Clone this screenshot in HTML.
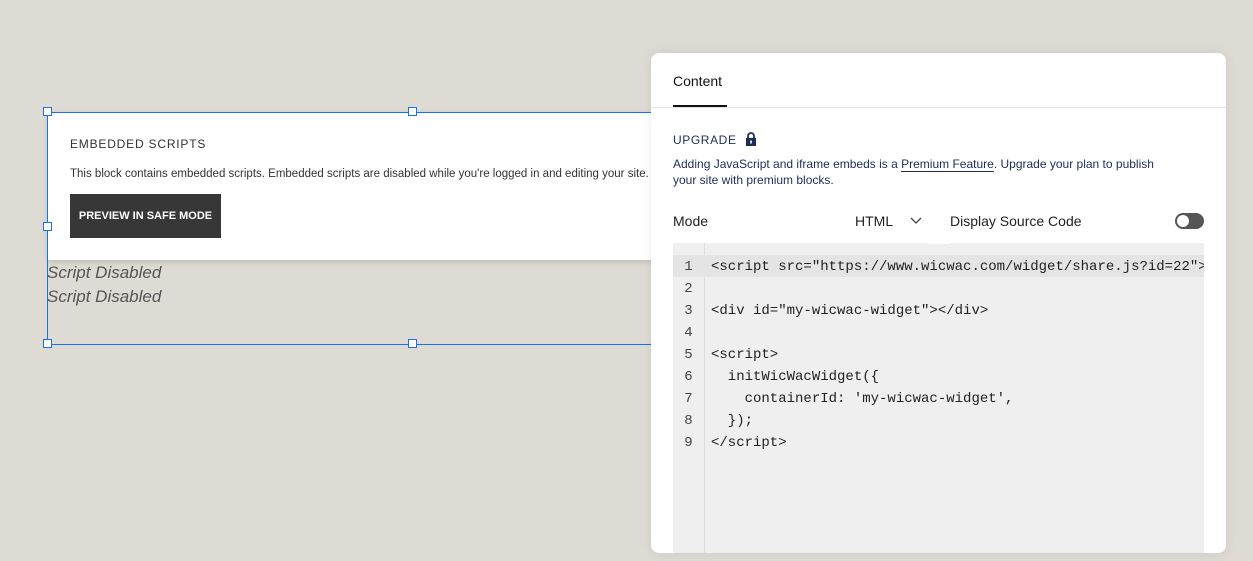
<!DOCTYPE html>
<html><head><style>
body{margin:0;width:1253px;height:561px;background:#dedbd5;font-family:"Liberation Sans",sans-serif;position:relative;overflow:hidden}
.abs{position:absolute}
.card{left:48px;top:112px;width:640px;height:148px;background:#fff;box-shadow:0 2px 6px rgba(0,0,0,.15)}
.h{width:7px;height:7px;border:1.5px solid #1a6ff0;background:#fff}
.panel{left:651px;top:53px;width:575px;height:500px;background:#fff;border-radius:8px;box-shadow:0 0 12px rgba(0,0,0,.08);overflow:hidden}
.code{font-family:"Liberation Mono",monospace;font-size:14px;color:#222}
.ln{position:absolute;left:0;width:31px;text-align:center;color:#444}
.ct{position:absolute;left:38px;white-space:pre}
</style></head><body>
<div class="abs card">
<div class="abs" style="left:22px;top:25px;font-size:12px;letter-spacing:.8px;color:#333">EMBEDDED SCRIPTS</div>
<div class="abs" style="left:22px;top:56px;font-size:11.5px;color:#333;white-space:nowrap">This block contains embedded scripts. Embedded scripts are disabled while you're logged in and editing your site.</div>
<div class="abs" style="left:22px;top:82px;width:151px;height:44px;background:#373737;color:#fff;font-size:11px;font-weight:bold;line-height:44px;text-align:center">PREVIEW IN SAFE MODE</div>
</div>
<div class="abs" style="left:47px;top:261px;font-size:17px;font-style:italic;color:#555;line-height:24px">Script Disabled<br>Script Disabled</div>
<div class="abs" style="left:47px;top:112px;width:620px;height:231px;border:1px solid #1a6ff0;border-right:none"></div>
<div class="abs h" style="left:43px;top:107px"></div>
<div class="abs h" style="left:408px;top:107px"></div>
<div class="abs h" style="left:43px;top:222px"></div>
<div class="abs h" style="left:43px;top:339px"></div>
<div class="abs h" style="left:408px;top:339px"></div>
<div class="abs panel">
<div class="abs" style="left:22px;top:20px;font-size:14px;color:#111">Content</div>
<div class="abs" style="left:22px;top:52px;width:54px;height:2px;background:#111"></div>
<div class="abs" style="left:0;top:54px;width:575px;height:1px;background:#e4e4e4"></div>
<div class="abs" style="left:22px;top:80px;font-size:12px;letter-spacing:.6px;color:#1d2d55">UPGRADE</div>
<svg class="abs" style="left:94px;top:79px" width="12" height="14" viewBox="0 0 12 14"><path d="M3 6V4a3 3 0 0 1 6 0v2" fill="none" stroke="#1d2d55" stroke-width="1.8"/><rect x="1" y="6" width="10" height="8" fill="#1d2d55"/><rect x="5.2" y="8.5" width="1.6" height="3" fill="#fff"/></svg>
<div class="abs" style="left:22px;top:103px;width:505px;font-size:12px;line-height:16px;color:#1d2d55">Adding JavaScript and iframe embeds is a <span style="border-bottom:1px solid #1d2d55">Premium Feature</span>. Upgrade your plan to publish your site with premium blocks.</div>
<div class="abs" style="left:22px;top:160px;font-size:14px;color:#222">Mode</div>
<div class="abs" style="left:204px;top:160px;font-size:14px;color:#222">HTML</div>
<svg class="abs" style="left:259px;top:164px" width="12" height="8"><path d="M1 1l5 5 5-5" fill="none" stroke="#444" stroke-width="1.3"/></svg>
<div class="abs" style="left:299px;top:160px;font-size:14px;color:#222">Display Source Code</div>
<div class="abs" style="left:524px;top:160px;width:29px;height:16px;border-radius:8px;background:#555"></div>
<div class="abs" style="left:526px;top:162px;width:12px;height:12px;border-radius:6px;background:#fff"></div>
<div class="abs code" style="left:22px;top:190px;width:531px;height:310px;background:#efefef;overflow:hidden">
<div class="abs" style="left:31px;top:0;width:1px;height:310px;background:#ddd"></div>
<div class="abs" style="left:255px;top:-2px;width:22px;height:3px;background:#fff"></div>
<div class="abs" style="left:0;top:12px;width:531px;height:22px;background:#e4e4e4"></div>
<div class="ln" style="top:16px">1</div><div class="ct" style="top:16px">&lt;script src="https://www.wicwac.com/widget/share.js?id=22"&gt;</div>
<div class="ln" style="top:38px">2</div>
<div class="ln" style="top:60px">3</div><div class="ct" style="top:60px">&lt;div id="my-wicwac-widget"&gt;&lt;/div&gt;</div>
<div class="ln" style="top:82px">4</div>
<div class="ln" style="top:104px">5</div><div class="ct" style="top:104px">&lt;script&gt;</div>
<div class="ln" style="top:126px">6</div><div class="ct" style="top:126px">  initWicWacWidget({</div>
<div class="ln" style="top:148px">7</div><div class="ct" style="top:148px">    containerId: 'my-wicwac-widget',</div>
<div class="ln" style="top:170px">8</div><div class="ct" style="top:170px">  });</div>
<div class="ln" style="top:192px">9</div><div class="ct" style="top:192px">&lt;/script&gt;</div>
</div>
</div>
</body></html>
